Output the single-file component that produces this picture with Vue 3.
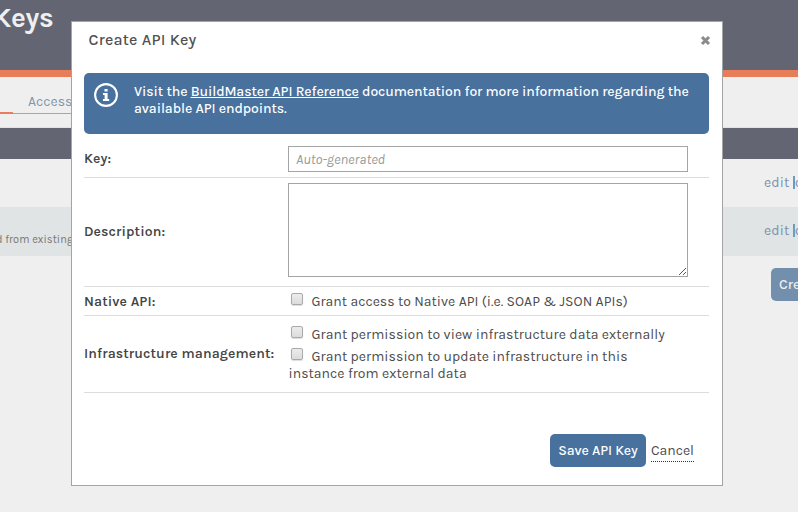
<script setup>
import { ref } from 'vue'

const key = ref('')
const description = ref('')
const nativeApi = ref(false)
const viewInfra = ref(false)
const updateInfra = ref(false)
</script>

<template>
  <div class="page">
    <header class="top"><h1>Keys</h1></header>
    <nav class="tabs">
      <span class="tab active"></span>
      <span class="tab access">Access</span>
    </nav>
    <div class="thead"></div>
    <div class="trow"><span></span><span class="actions">edit <i></i>d</span></div>
    <div class="trow alt"><span class="note">d from existing</span><span class="actions">edit <i></i>d</span></div>
    <div class="page-foot"><span class="create">Create</span></div>

    <section class="modal">
      <div class="title">
        <h2>Create API Key</h2>
        <svg class="close" width="11" height="11" viewBox="0 0 11 11">
          <path d="M2 2L9 9M9 2L2 9" fill="none" stroke="#8b8b8b" stroke-width="3.1" />
        </svg>
      </div>
      <div class="info">
        <svg class="info-icon" width="24" height="24" viewBox="0 0 24 24">
          <circle cx="12" cy="12" r="10.9" fill="none" stroke="#fff" stroke-width="2.1" />
          <path d="M10.5 5.9h3.1v2.5h-3.1zM9 10h4.6v6h1.6v2H9v-2h1.6v-4H9z" fill="#fff" />
        </svg>
        <p>
          <span>Visit the <a>BuildMaster API Reference</a> documentation for more information regarding the</span>
          <span>available API endpoints.</span>
        </p>
      </div>
      <div class="row key-row">
        <label>Key:</label>
        <input v-model="key" class="field" type="text" placeholder="Auto-generated" />
      </div>
      <div class="row desc-row">
        <label>Description:</label>
        <div class="area-wrap">
          <textarea v-model="description" class="field"></textarea>
          <svg class="grip" width="9" height="9" viewBox="0 0 9 9">
            <path d="M1 8L8 1M5 8L8 5" stroke="#555" fill="none" />
          </svg>
        </div>
      </div>
      <div class="row native-row">
        <label>Native API:</label>
        <div class="option"><input v-model="nativeApi" type="checkbox" /><span class="soap">Grant access to Native API (i.e. SOAP &amp; JSON APIs)</span></div>
      </div>
      <div class="row infra-row">
        <label>Infrastructure management:</label>
        <div class="options">
          <div class="option"><input v-model="viewInfra" type="checkbox" /><span>Grant permission to view infrastructure data externally</span></div>
          <div class="option"><input v-model="updateInfra" type="checkbox" /><span>Grant permission to update infrastructure in this</span></div>
          <div class="wrapped">instance from external data</div>
        </div>
      </div>
      <div class="buttons">
        <button>Save API Key</button>
        <a class="cancel">Cancel</a>
      </div>
    </section>
  </div>
</template>

<style>
body { margin: 0; }
</style>

<style scoped>
* { box-sizing: border-box; }
.page {
  position: relative;
  width: 798px;
  height: 512px;
  overflow: hidden;
  background: #efefef;
  color: #4c4c4c;
  font: 14px/17px Karla, Roboto, sans-serif;
  white-space: nowrap;
}
h1, h2, p { margin: 0; }
.top { height: 77px; background: #636672; border-bottom: 7px solid #e87e59; }
h1 { padding-top: 1px; margin-left: -7px; font-size: 28px; line-height: 34px; font-weight: 700; color: #efefef; letter-spacing: -0.4px; }
.tabs { display: flex; height: 37px; margin-bottom: 13px; width: 500px; border-bottom: 1px solid #9ea9b0; }
.tab.active { width: 13px; height: 37px; border-bottom: 2px solid #e87e59; }
.access { padding: 16px 0 0 15px; color: #8296ab; }
.thead { height: 32px; background: #636672; border-top: 1px solid #e0e4e4; }
.trow { display: flex; justify-content: space-between; height: 48px; }
.trow.alt { height: 49px; background: #e0e4e4; }
.note { padding-top: 24px; margin-left: -4px; font-size: 11px; color: #777; letter-spacing: 0.05px; }
.actions { width: 34px; padding-top: 15px; color: #7c92ab; letter-spacing: 0.1px; }
.actions i { display: inline-block; width: 2px; height: 13px; background: #6d9cc2; vertical-align: -2px; }
.page-foot { padding: 12px 0 0 771px; }
.create { display: block; width: 110px; height: 33px; padding-left: 8px; border-radius: 5px; background: #728fad; color: #efefef; font-weight: 500; line-height: 34px; }

.modal { position: absolute; left: 71px; top: 21px; width: 652px; height: 465px; padding: 0 13px 0 12px; background: #fff; border: 1px solid #a3a5a5; }
.title { display: flex; justify-content: space-between; height: 51px; padding: 8px 0 0 4.5px; }
h2 { font-size: 16px; line-height: 19px; font-weight: 550; color: #505050; letter-spacing: 0.22px; }
.close { margin: 5px -2px 0 0; }
.info { display: flex; height: 61px; padding: 10px; border-radius: 5px; background: #48719e; color: #fff; }
.info-icon { margin-right: 16px; }
.info p { font-weight: 500; letter-spacing: -0.1px; }
.info p span { display: block; }
.info a { text-decoration: underline; text-underline-offset: 1px; }
.row { display: flex; align-items: center; border-bottom: 1px solid #dcdcdc; }
.row label { flex: 0 0 204px; margin-top: -2px; color: #444; font-weight: 600; letter-spacing: 0.1px; }
.key-row { height: 44px; padding-top: 7px; }
.desc-row { height: 109px; }
.native-row { height: 29px; }
.native-row label { margin-top: 0; }
.infra-row { height: 77px; }
.field { display: block; width: 400px; margin: 0; padding: 0 7px; border: 1px solid #a3a5a5; border-radius: 0; background: #fff; color: #444; font: inherit; outline: 0; }
input.field { height: 26px; }
.field::placeholder { color: #999; font-style: italic; letter-spacing: 0; }
.area-wrap { position: relative; margin-top: -4px; }
textarea.field { height: 94px; resize: none; }
.grip { position: absolute; right: 1px; bottom: 1px; }
.option { display: flex; align-items: center; height: 22px; letter-spacing: 0.05px; }
.soap { letter-spacing: 0.02px; }
.option input { appearance: none; width: 12px; height: 12px; margin: -5px 8.5px 0 3px; border: 1px solid #a9a9a9; border-radius: 2px; background: linear-gradient(#ececec, #dcdcdc); box-shadow: 0 1px 1px #ddd; }
.options { margin-top: -3px; }
.wrapped { margin-top: -2px; padding-left: 0.5px; letter-spacing: 0.03px; }
.buttons { display: flex; justify-content: flex-end; gap: 5px; padding: 41px 15px 0 0; }
button { width: 96px; height: 33px; padding: 0; border: 0; border-radius: 5px; background: #48719e; color: #fff; font: inherit; font-weight: 550; letter-spacing: -0.15px; }
.cancel { height: 20px; margin-top: 8px; border-bottom: 1px dotted #333; }
</style>
